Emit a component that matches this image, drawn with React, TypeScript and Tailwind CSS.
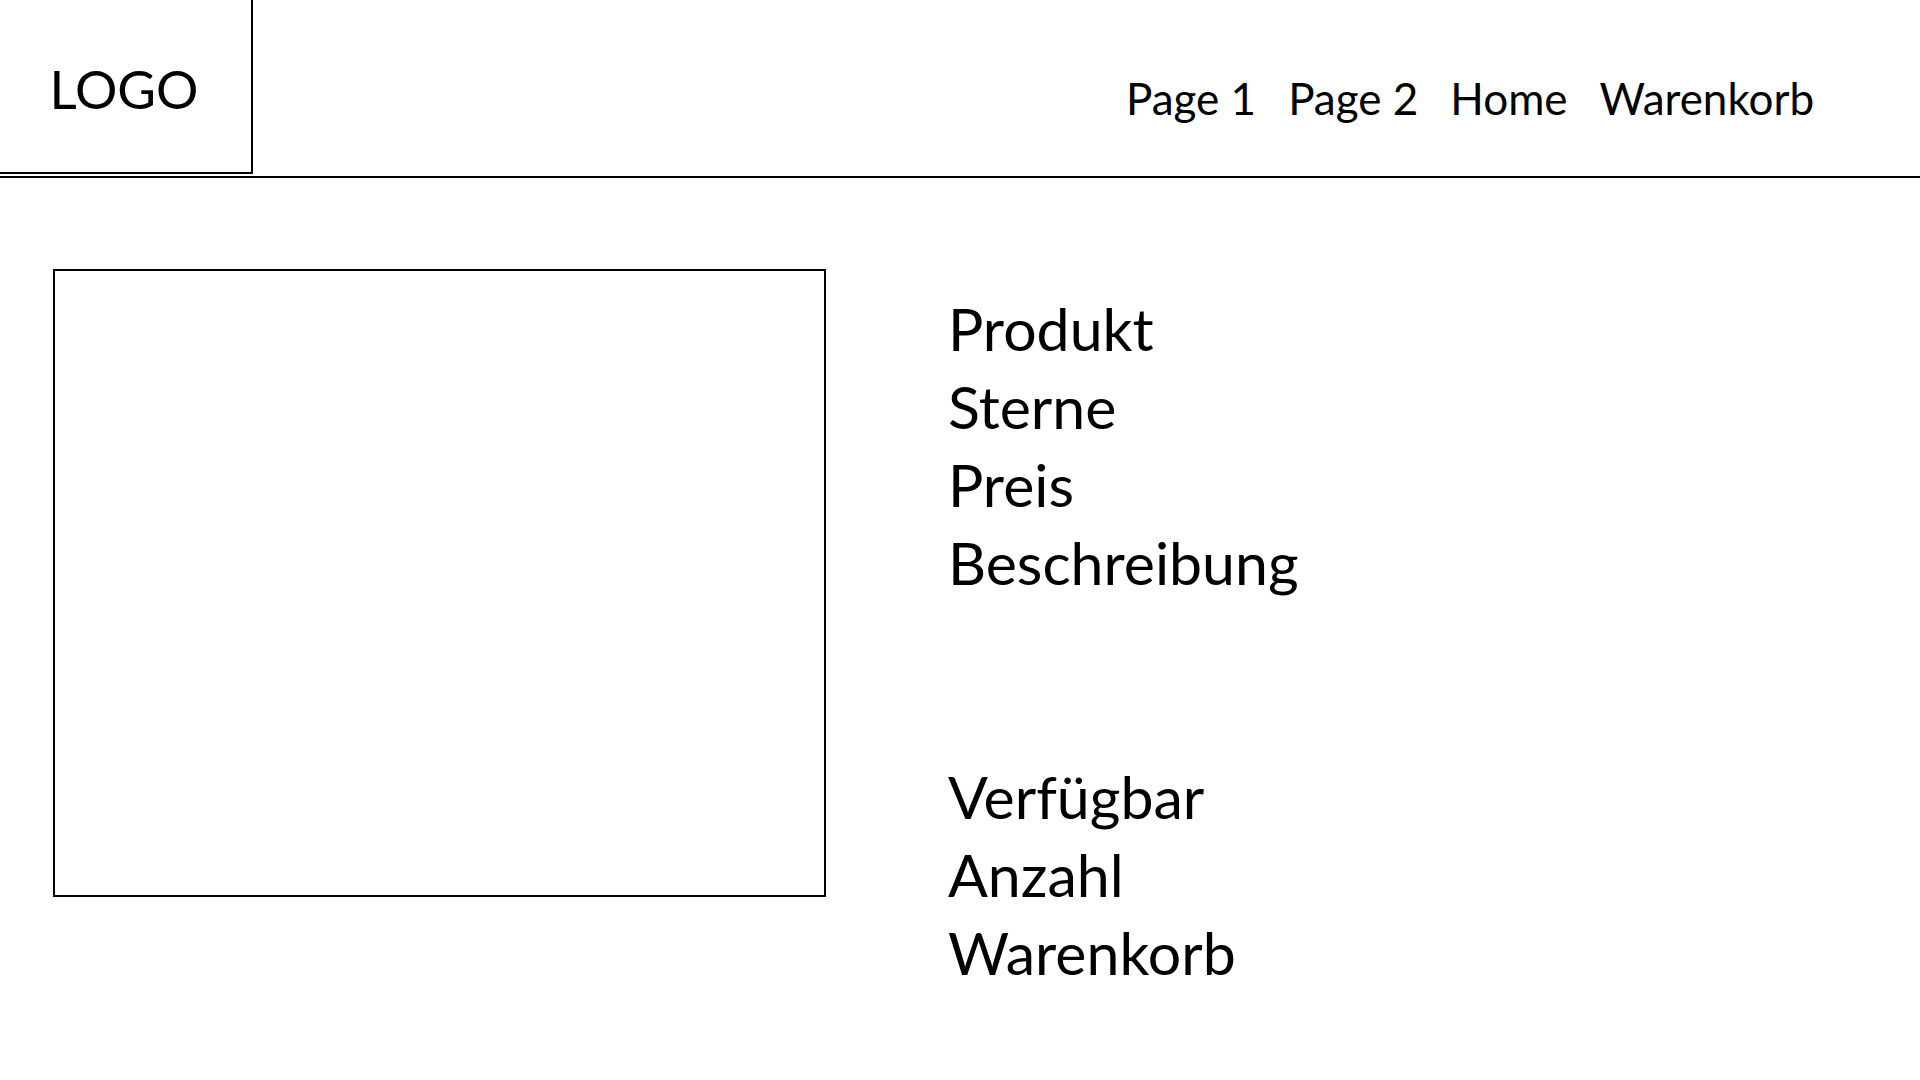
export default function App() {
  const details = ['Produkt', 'Sterne', 'Preis', 'Beschreibung']
  const order = ['Verfügbar', 'Anzahl', 'Warenkorb']
  const nav = ['Page 1', 'Page 2', 'Home', 'Warenkorb']

  return (
    <div className="min-h-screen w-[1920px] bg-white text-black font-['Lato',sans-serif]">
      <header className="flex h-[178px] border-b-2 border-black">
        <div className="flex h-[174px] w-[253px] items-center justify-center border-r-2 border-b-2 border-black pt-[4px] pr-[3px]">
          <span className="text-[53px] leading-none">LOGO</span>
        </div>
        <nav className="ml-[873px] flex gap-[32px] pt-[76px] text-[44px] leading-none">
          {nav.map((item) => (
            <a key={item} href="#">{item}</a>
          ))}
        </nav>
      </header>

      <main className="flex pl-[53px] pt-[91px]">
        <div className="h-[628px] w-[773px] border-2 border-black" />
        <div className="ml-[122px] mt-[21px] text-[59px] leading-[78px]">
          {details.map((item) => (
            <div key={item}>{item}</div>
          ))}
          <div className="mt-[156px]">
            {order.map((item) => (
              <div key={item}>{item}</div>
            ))}
          </div>
        </div>
      </main>
    </div>
  )
}
